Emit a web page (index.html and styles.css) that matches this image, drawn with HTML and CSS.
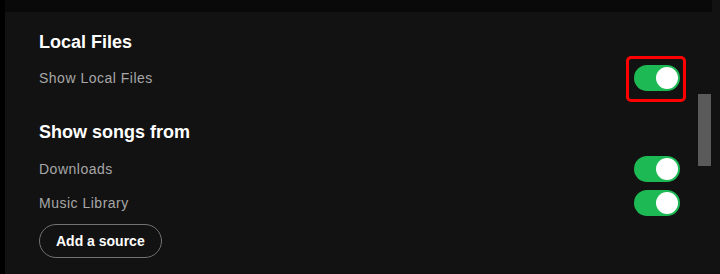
FILE: index.html
```html
<!DOCTYPE html>
<html lang="en">
<head>
    <meta charset="UTF-8">
    <title>Settings</title>
    <link rel="stylesheet" href="styles.css">
</head>
<body>
    <div class="app">
        <div class="edge"></div>
        <div class="main">
            <div class="topbar"></div>
            <div class="settings">
                <h2 class="section-title">Local Files</h2>
                <div class="row">
                    <span class="label">Show Local Files</span>
                    <span class="toggle-wrap highlighted">
                        <span class="toggle on"><span class="knob"></span></span>
                    </span>
                </div>

                <h2 class="section-title second">Show songs from</h2>
                <div class="row">
                    <span class="label">Downloads</span>
                    <span class="toggle on"><span class="knob"></span></span>
                </div>
                <div class="row">
                    <span class="label">Music Library</span>
                    <span class="toggle on"><span class="knob"></span></span>
                </div>
                <button class="add-source">Add a source</button>
            </div>
            <div class="scroll-thumb"></div>
        </div>
    </div>
</body>
</html>
```

FILE: styles.css
```css
body {
    margin: 0;
    background-color: #000;
    font-family: "Liberation Sans", Arial, sans-serif;
    overflow: hidden;
}
.app {
    display: flex;
    height: 274px;
}
.edge {
    width: 5px;
    background-color: #000;
}
.main {
    flex: 1;
    position: relative;
    background-color: #121212;
}
.topbar {
    height: 12px;
    margin-right: 8px;
    background-color: #090909;
}
.settings {
    padding: 18px 40px 0 34px;
}
.section-title {
    margin: 0 0 7px 0;
    font-size: 18px;
    line-height: 24px;
    font-weight: bold;
    color: #fff;
}
.section-title.second {
    margin-top: 25px;
    margin-bottom: 8px;
}
.row {
    display: flex;
    justify-content: space-between;
    align-items: center;
    height: 34px;
}
.label {
    font-size: 14px;
    letter-spacing: 0.5px;
    color: #a7a7a7;
}
.toggle-wrap {
    position: relative;
    display: flex;
}
.highlighted::after {
    content: "";
    position: absolute;
    left: -8px;
    top: -9px;
    width: 54px;
    height: 40px;
    border: 3px solid #ff0000;
    border-radius: 5px;
}
.toggle {
    display: flex;
    align-items: center;
    justify-content: flex-end;
    box-sizing: border-box;
    width: 46px;
    height: 26px;
    padding: 2px;
    border-radius: 13px;
    background-color: #1db954;
}
.knob {
    width: 22px;
    height: 22px;
    border-radius: 50%;
    background-color: #fff;
}
.add-source {
    margin-top: 4px;
    height: 34px;
    padding: 0 16px;
    border: 1px solid #727272;
    border-radius: 17px;
    background: transparent;
    color: #fff;
    font-family: inherit;
    font-size: 14px;
    font-weight: bold;
}
.scroll-thumb {
    position: absolute;
    left: 693px;
    top: 94px;
    width: 13px;
    height: 72px;
    background-color: #5a5a5a;
}
```
